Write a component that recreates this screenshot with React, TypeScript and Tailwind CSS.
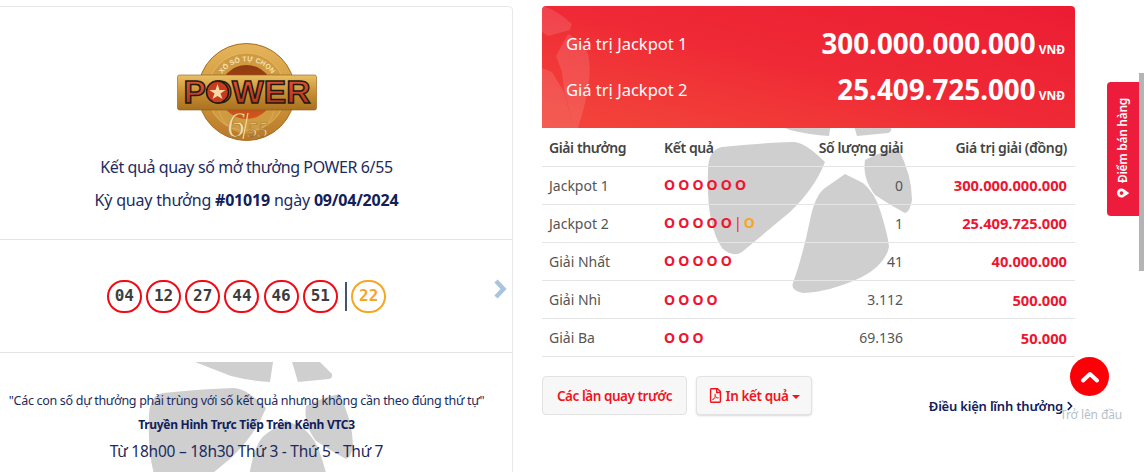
import { FaChevronRight, FaMapMarkerAlt, FaRegFilePdf } from "react-icons/fa";

const FONT = "font-['Noto_Sans','Open_Sans',sans-serif]";

const ROWS = [
  { name: "Jackpot 1", balls: 6, bonus: false, count: "0", value: "300.000.000.000" },
  { name: "Jackpot 2", balls: 5, bonus: true, count: "1", value: "25.409.725.000" },
  { name: "Giải Nhất", balls: 5, bonus: false, count: "41", value: "40.000.000" },
  { name: "Giải Nhì", balls: 4, bonus: false, count: "3.112", value: "500.000" },
  { name: "Giải Ba", balls: 3, bonus: false, count: "69.136", value: "50.000" },
];

const NUMBERS = ["04", "12", "27", "44", "46", "51"];

// grey star that sits behind the page content
function Watermark({ className }: { className: string }) {
  return (
    <svg viewBox="700 116 215 180" width="215" height="180" className={className} aria-hidden>
      <g fill="#cfcfcf">
        <path d="M754 116 L832 116 L829 136 Q810 135 790 130 Z" />
        <path d="M851 116 L879 116 L891 128 Q892 132 888 133 L857 136 Z" />
        <path d="M708 170 Q708 150 722 147 Q760 143 793 142 Q805 142 825 162 Q815 188 790 212 L742 252 Q733 258 722 248 Q706 225 708 170 Z" />
        <path d="M845 174 L863 183 Q875 193 880 210 Q888 235 889 247 Q885 265 862 277 Q830 292 803 293 Q790 290 793 283 Q803 255 810 220 Q815 195 825 188 Z" />
        <path d="M865 160 Q880 152 898 148 Q912 175 912 200 Q910 212 905 213 Q890 205 875 195 Q862 178 865 160 Z" />
      </g>
    </svg>
  );
}

function Logo() {
  return (
    <svg viewBox="0 0 140 98" width="140" height="98" className="block overflow-visible" aria-label="Power 6/55">
      <defs>
        <linearGradient id="coin" x1="0" y1="0" x2="0" y2="1">
          <stop offset="0" stopColor="#e5b45c" />
          <stop offset="0.5" stopColor="#d09a3b" />
          <stop offset="1" stopColor="#b9782a" />
        </linearGradient>
        <linearGradient id="bar" x1="0" y1="0" x2="0" y2="1">
          <stop offset="0" stopColor="#eac063" />
          <stop offset="0.5" stopColor="#c98f34" />
          <stop offset="1" stopColor="#a9701f" />
        </linearGradient>
        <linearGradient id="dome" x1="0" y1="0" x2="0" y2="1">
          <stop offset="0" stopColor="#8f3a10" />
          <stop offset="1" stopColor="#d4561c" />
        </linearGradient>
        <linearGradient id="word" x1="0" y1="0" x2="0" y2="1">
          <stop offset="0" stopColor="#e8583a" />
          <stop offset="1" stopColor="#a92c12" />
        </linearGradient>
        <path id="arc" d="M45 31 A 30.8 30.8 0 0 1 95 31" />
      </defs>
      <circle cx="69.5" cy="49" r="48.5" fill="url(#coin)" stroke="#a86c22" strokeWidth="1" />
      <circle cx="69.5" cy="49" r="39" fill="#cf9a40" stroke="#e6c070" strokeWidth="0.7" />
      <circle cx="69.5" cy="49" r="27" fill="url(#dome)" />
      <circle cx="69.5" cy="62" r="28" fill="none" stroke="#e2b665" strokeWidth="0.6" />
      <text fontSize="7" fontWeight="700" fill="#f6e2b0" className="font-['Liberation_Sans',sans-serif]">
        <textPath href="#arc" textLength="58">XỔ SỐ TỰ CHỌN</textPath>
      </text>
      <rect x="0.5" y="32" width="139" height="35" rx="2" fill="url(#bar)" stroke="#8c5a18" strokeWidth="0.6" />
      <text
        x="6.5"
        y="60"
        fontSize="31"
        fontWeight="700"
        textLength="127"
        lengthAdjust="spacingAndGlyphs"
        fill="url(#word)"
        stroke="#1f1a14"
        strokeWidth="1.4"
        className="font-['Liberation_Sans',sans-serif]"
      >
        POWER
      </text>
      <circle cx="40.5" cy="49" r="11" fill="#c73c1c" stroke="#1f1a14" strokeWidth="1.5" />
      <polygon points="40.5,41 42.5,47 48.5,47 43.5,50.5 45.5,56 40.5,53 35.5,56 37.5,50.5 32.5,47 38.5,47" fill="#f6d9a5" />
      <g fill="#f2dca0" stroke="#9a6a22" strokeWidth="0.5" className="font-['Liberation_Serif',serif]">
        <text x="50" y="94" fontSize="36" fontStyle="italic">6</text>
        <text x="70" y="94" fontSize="21" fontStyle="italic">55</text>
      </g>
      <line x1="71" y1="70" x2="66" y2="96" stroke="#f2dca0" strokeWidth="1.2" />
    </svg>
  );
}

function Ball({ value, bonus }: { value: string; bonus?: boolean }) {
  return (
    <span
      className={`flex h-[33px] w-[35px] items-center justify-center rounded-full border-2 bg-white font-['DejaVu_Sans_Mono',monospace] text-[16px] font-bold ${
        bonus ? "border-[#f5a623] text-[#f5a623]" : "border-[#f00a14] text-[#3d3d3d]"
      }`}
    >
      {value}
    </span>
  );
}

function Result({ balls, bonus }: { balls: number; bonus: boolean }) {
  return (
    <span className="flex items-center gap-[3.2px] text-[14px] font-bold leading-none text-[#f0142f]">
      {Array.from({ length: balls }).map((_, i) => (
        <span key={i} className="w-[11px] text-center">O</span>
      ))}
      {bonus && <span className="mx-[-1px] font-normal">|</span>}
      {bonus && <span className="w-[11px] text-center text-[#f5a623]">O</span>}
    </span>
  );
}

export default function App() {
  return (
    <div className={`relative h-[472px] w-[1144px] overflow-hidden bg-white ${FONT}`}>
      <div className="ml-[-20px] flex gap-[29px] pt-[6px]">
        {/* LEFT CARD */}
        <div className="h-[480px] w-[533px] rounded-[4px] border border-[#e8e8e8] text-[#1c2b5e]">
          <div className="flex h-[233px] flex-col items-center border-b border-[#e5e5e5] pt-[36px]">
            <Logo />
            <p className="mt-[14px] text-[16px] leading-[24px] tracking-[-0.4px]">Kết quả quay số mở thưởng POWER 6/55</p>
            <p className="mt-[9px] text-[16px] leading-[24px] tracking-[-0.2px]">
              Kỳ quay thưởng <b className="text-[#10205a]">#01019</b> ngày <b className="text-[#10205a]">09/04/2024</b>
            </p>
          </div>

          <div className="relative flex h-[113px] items-center justify-center gap-[4.2px] border-b border-[#e5e5e5]">
            {NUMBERS.map((n) => (
              <Ball key={n} value={n} />
            ))}
            <span className="ml-[3px] h-[29px] w-[2px] bg-[#44566e]" />
            <Ball value="22" bonus />
            <svg viewBox="0 0 14 20" width="14" height="20" className="absolute right-[5px] top-[39px]" aria-hidden>
              <polyline points="3,2 10.5,10 3,18" fill="none" stroke="#a9c4de" strokeWidth="4.5" />
            </svg>
          </div>

          <div className="relative h-[130px] pt-[36px] text-center">
            <Watermark className="absolute left-[160px] top-[9px]" />
            <div className="relative flex flex-col items-center">
              <p className="text-[12.5px] leading-[24px] tracking-[-0.3px]">"Các con số dự thưởng phải trùng với số kết quả nhưng không cần theo đúng thứ tự"</p>
              <p className="text-[12px] font-bold leading-[24px] tracking-[-0.28px] text-[#10205a]">Truyền Hình Trực Tiếp Trên Kênh VTC3</p>
              <p className="text-[15.5px] leading-[28px] tracking-[-0.25px]">Từ 18h00 – 18h30 Thứ 3 - Thứ 5 - Thứ 7</p>
            </div>
          </div>
        </div>

        {/* RIGHT PANEL */}
        <div className="relative w-[533px]">
          <Watermark className="absolute left-[158px] top-[110px]" />

          <div className="relative z-10 h-[122px] overflow-hidden rounded-t-[4px] bg-gradient-to-tr from-[#f3463b] via-[#ef2935] to-[#ec1c33] pt-[15px] text-white">
            <svg viewBox="0 0 60 122" width="60" height="122" className="absolute left-0 top-0" aria-hidden>
              <g fill="#ffffff" fillOpacity="0.12">
                <path d="M0 0 Q12 2 30 18 L28 24 L6 30 L0 26 Z" />
                <path d="M14 50 L26 28 Q40 34 46 48 Q52 72 36 122 L32 122 L22 84 L20 66 Z" />
                <path d="M0 62 L10 66 L22 86 L32 122 L0 122 Z" />
              </g>
            </svg>
            {[
              { label: "Giá trị Jackpot 1", value: "300.000.000.000" },
              { label: "Giá trị Jackpot 2", value: "25.409.725.000" },
            ].map((j) => (
              <div key={j.label} className="relative flex h-[46px] items-center justify-between pl-[24px] pr-[10px]">
                <span className="text-[16.5px]">{j.label}</span>
                <span className="flex items-baseline gap-[3px]">
                  <span className="text-[27.8px] font-bold leading-none">{j.value}</span>
                  <span className="text-[12px] font-bold">VNĐ</span>
                </span>
              </div>
            ))}
          </div>

          <table className="relative w-full table-fixed border-collapse text-[14px] text-[#555555]">
            <thead>
              <tr className="h-[38px] border-b border-[#e5e5e5] text-[#444444]">
                <th className="w-[115px] pl-[7px] pt-[2px] text-left font-semibold tracking-[-0.4px]">Giải thưởng</th>
                <th className="w-[110px] pl-[7px] pt-[2px] text-left font-semibold tracking-[-0.4px]">Kết quả</th>
                <th className="w-[144px] pr-[8px] pt-[2px] text-right font-semibold tracking-[-0.4px]">Số lượng giải</th>
                <th className="pr-[8px] pt-[2px] text-right font-semibold tracking-[-0.35px]">Giá trị giải (đồng)</th>
              </tr>
            </thead>
            <tbody>
              {ROWS.map((r) => (
                <tr key={r.name} className="h-[38.2px] border-b border-[#e5e5e5]">
                  <td className="pl-[7px]">{r.name}</td>
                  <td className="pl-[7px]">
                    <Result balls={r.balls} bonus={r.bonus} />
                  </td>
                  <td className="pr-[8px] text-right">{r.count}</td>
                  <td className="pr-[8px] text-right text-[14.7px] font-bold text-[#f0142f]">{r.value}</td>
                </tr>
              ))}
            </tbody>
          </table>

          <div className="mt-[19px] flex items-start justify-between">
            <div className="flex gap-[9px]">
              <button className="h-[39px] w-[145px] rounded-[4px] border border-[#e2e2e2] bg-[#f7f7f7] text-[13.5px] font-semibold tracking-[-0.45px] text-[#f0141e]">
                Các lần quay trước
              </button>
              <button className="flex h-[39px] w-[116px] items-center justify-center gap-[3px] rounded-[4px] border border-[#e2e2e2] bg-[#f7f7f7] text-[13.5px] font-semibold tracking-[-0.4px] text-[#f0141e] shadow-[0_1px_2px_rgba(0,0,0,0.15)]">
                <FaRegFilePdf size={15} />
                In kết quả
                <span className="ml-[1px] mt-[3px] border-x-[4px] border-t-[4px] border-x-transparent border-t-[#f0141e]" />
              </button>
            </div>
            <a className="mt-[21px] flex items-center gap-[2px] text-[13px] font-semibold leading-[18px] tracking-[-0.2px] text-[#10205a]">
              Điều kiện lĩnh thưởng
              <FaChevronRight size={10} />
            </a>
          </div>
        </div>
      </div>

      {/* floating bits on the right edge */}
      <div className="absolute left-[1107px] top-[82px] flex h-[134px] w-[32px] items-center justify-center rounded-l-[4px] bg-[#ee1c3c] text-white">
        <span className="flex rotate-180 items-center gap-[4px] text-[12px] font-semibold tracking-[-0.3px] [writing-mode:vertical-rl]">
          <FaMapMarkerAlt size={12} className="rotate-90" />
          Điểm bán hàng
        </span>
      </div>
      <div className="absolute left-[1139px] top-[73px] h-[198px] w-[5px] bg-[#b4b4b4]" />

      <div className="absolute left-[1070px] top-[357px] flex h-[39px] w-[39px] items-center justify-center rounded-full bg-[#fb0007]">
        <svg viewBox="0 0 20 12" width="20" height="12" aria-hidden>
          <polyline points="3,9.5 10,3 17,9.5" fill="none" stroke="#ffffff" strokeWidth="4" strokeLinecap="round" strokeLinejoin="round" />
        </svg>
      </div>
      <span className="absolute left-[1060px] top-[406px] text-[12px] leading-[18px] tracking-[-0.1px] text-[#b7bfc9]">Trở lên đầu</span>
    </div>
  );
}
